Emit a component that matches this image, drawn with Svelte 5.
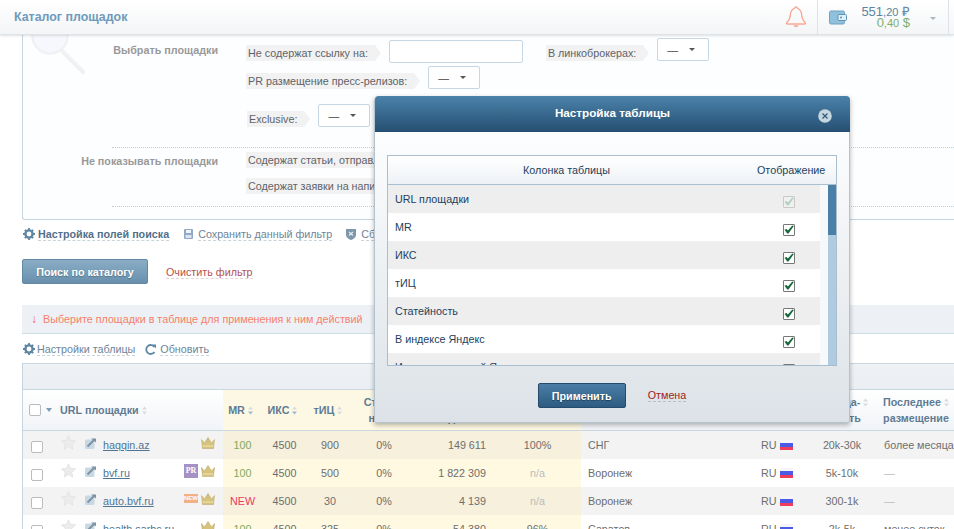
<script lang="ts">
    const rows = [
        { url: "haqqin.az", badge: "", mr: "100", iks: "4500", tic: "900", stat: "0%", visits: "149 611", pct: "100%", city: "СНГ", price: "20k-30k", last: "более месяца" },
        { url: "bvf.ru", badge: "PR", mr: "100", iks: "4500", tic: "500", stat: "0%", visits: "1 822 309", pct: "n/a", city: "Воронеж", price: "5k-10k", last: "—" },
        { url: "auto.bvf.ru", badge: "NEW", mr: "NEW", iks: "4500", tic: "30", stat: "0%", visits: "4 139", pct: "n/a", city: "Воронеж", price: "300-1k", last: "—" },
        { url: "health.sarbc.ru", badge: "", mr: "100", iks: "4500", tic: "325", stat: "0%", visits: "54 380", pct: "96%", city: "Саратов", price: "2k-5k", last: "менее суток" },
    ];

    const columns = [
        { name: "URL площадки", checked: true, locked: true },
        { name: "MR", checked: true },
        { name: "ИКС", checked: true },
        { name: "тИЦ", checked: true },
        { name: "Статейность", checked: true },
        { name: "В индексе Яндекс", checked: true },
        { name: "Индексированный Яндекс", checked: false },
    ];
</script>

{#snippet gear(color: string)}
    <svg class="ico" width="12" height="12" viewBox="0 0 12 12">
        <circle cx="6" cy="6" r="3.6" fill="none" stroke={color} stroke-width="2.4" />
        <g stroke={color} stroke-width="1.8">
            <path d="M6 0v2M6 10v2M0 6h2M10 6h2M1.8 1.8l1.4 1.4M8.8 8.8l1.4 1.4M1.8 10.2l1.4-1.4M8.8 3.2l1.4-1.4" />
        </g>
    </svg>
{/snippet}

{#snippet sort()}
    <svg class="sort" width="5" height="9" viewBox="0 0 5 9">
        <path d="M2.5 0.5L5 3.5H0z" fill="#d5dbe0" />
        <path d="M2.5 8.5L5 5.5H0z" fill="#d5dbe0" />
    </svg>
{/snippet}

{#snippet sortActive()}
    <svg class="sort" width="5" height="9" viewBox="0 0 5 9">
        <path d="M2.5 0.5L5 3.5H0z" fill="#d5dbe0" />
        <path d="M2.5 8.5L5 5.5H0z" fill="#9db8cc" />
    </svg>
{/snippet}

{#snippet select()}
    <div class="select">
        <span>—</span>
        <i class="caret"></i>
    </div>
{/snippet}

<div class="page">
    <header class="topbar">
        <div class="title">Каталог площадок</div>
        <svg class="bell" width="22" height="24" viewBox="0 0 22 24">
            <path
                d="M11 2c-.9 0-1.4.6-1.4 1.4C6.8 4.3 5.6 6.6 5.4 9.6c-.2 3.2-1.5 6-3.7 8.1-.5.5-.2 1.3.5 1.3h17.6c.7 0 1-.8.5-1.3-2.2-2.1-3.500-4.900-3.700-8.100-.2-3-1.400-5.300-4.200-6.200C12.400 2.600 11.900 2 11 2z"
                fill="none"
                stroke="#f9a894"
                stroke-width="1.300"
            />
            <path d="M8.500 20.300c.4 1.300 1.300 2 2.500 2s2.100-.7 2.500-2z" fill="#f9a894" />
        </svg>
        <div class="balance">
            <svg width="18" height="15" viewBox="0 0 18 15">
                <rect x="0.500" y="1" width="15" height="13" rx="1.500" fill="#8fc0dc" stroke="#6fa3c2" />
                <rect x="9" y="4.500" width="8.500" height="6" rx="1" fill="#dff0f8" stroke="#5f94b4" />
                <circle cx="12" cy="7.500" r="1" fill="#5f94b4" />
            </svg>
            <div class="sums">
                <div class="rub">551<small>,20</small> ₽</div>
                <div class="usd">0<small>,40</small> $</div>
            </div>
            <i class="caret light"></i>
        </div>
        <div class="edge"></div>
    </header>

    <section class="filter">
        <svg class="magnifier" width="80" height="60" viewBox="0 0 80 60">
            <circle cx="27" cy="1" r="17.500" fill="#f6f8fd" stroke="#f0f1f3" stroke-width="2.500" />
            <path d="M40 17L60 37" stroke="#f1f1f1" stroke-width="4.500" stroke-linecap="round" />
        </svg>

        <div class="group first">
            <div class="group-label">Выбрать площадки</div>
            <div class="fields">
                <div class="field-row">
                    <span class="tag">Не содержат ссылку на:</span>
                    <input class="text-input" type="text" />
                    <span class="tag broker">В линкоброкерах:</span>
                    {@render select()}
                </div>
                <div class="field-row">
                    <span class="tag">PR размещение пресс-релизов:</span>
                    {@render select()}
                </div>
                <div class="field-row third">
                    <span class="tag">Exclusive:</span>
                    {@render select()}
                </div>
            </div>
        </div>
        <div class="divider"></div>
        <div class="group second">
            <div class="group-label">Не показывать площадки</div>
            <div class="fields tight">
                <div class="field-row"><span class="tag plain">Содержат статьи, отправленные на модерацию</span></div>
                <div class="field-row"><span class="tag plain">Содержат заявки на написание статей</span></div>
            </div>
        </div>
        <div class="divider"></div>
    </section>

    <div class="links">
        {@render gear("#5f87a3")}
        <a class="dash strong">Настройка полей поиска</a>
        <svg class="ico save" width="9" height="10" viewBox="0 0 9 10">
            <rect width="9" height="10" rx="1" fill="#8fa9c6" />
            <rect x="2" y="1" width="5" height="3" fill="#eef3f8" />
            <rect x="1.500" y="6" width="6" height="3" fill="#d9e4ee" />
        </svg>
        <a class="dash">Сохранить данный фильтр</a>
        <svg class="ico shield" width="10" height="12" viewBox="0 0 10 12">
            <path d="M0 1h10v6c0 2.500-2.500 4-5 5-2.500-1-5-2.500-5-5z" fill="#7f97aa" />
            <path d="M3 4l4 3.500M7 4L3 7.500" stroke="#e6ecf0" stroke-width="1.200" />
        </svg>
        <a class="dash">Сбросить фильтр</a>
    </div>

    <div class="actions">
        <button class="search" type="button">Поиск по каталогу</button>
        <a class="clear">Очистить фильтр</a>
    </div>

    <div class="notice"><span class="arrow">↓</span>Выберите площадки в таблице для применения к ним действий</div>

    <div class="table-links">
        {@render gear("#5f87a3")}
        <a class="dash">Настройки таблицы</a>
        <svg class="ico refresh" width="11" height="11" viewBox="0 0 11 11">
            <path d="M9.500 3A4.500 4.500 0 1 0 9.500 8" fill="none" stroke="#5f87a3" stroke-width="1.800" />
            <path d="M7 0.500h4v4z" fill="#5f87a3" />
        </svg>
        <a class="dash">Обновить</a>
    </div>

    <div class="catalog">
        <div class="toolbar"></div>
        <table>
            <colgroup>
                <col style="width: 200px" />
                <col style="width: 39px" />
                <col style="width: 45px" />
                <col style="width: 46px" />
                <col style="width: 62px" />
                <col style="width: 83px" />
                <col style="width: 83px" />
                <col style="width: 170px" />
                <col style="width: 60px" />
                <col style="width: 62px" />
                <col style="width: 86px" />
            </colgroup>
            <thead>
                <tr>
                    <th class="url-head">
                        <div class="url-head-in">
                            <span class="box head-box"></span>
                            <i class="caret blue"></i>
                            <span class="url-title">URL площадки</span>
                            {@render sort()}
                        </div>
                    </th>
                    <th class="hl short">MR {@render sortActive()}</th>
                    <th class="hl short">ИКС {@render sortActive()}</th>
                    <th class="hl short">тИЦ {@render sort()}</th>
                    <th class="hl">Статей-<br />ность</th>
                    <th class="hl">Посетители<br />в день</th>
                    <th class="hl">Доля<br />поиска</th>
                    <th>Регион</th>
                    <th>Язык</th>
                    <th>Посеща- {@render sort()}<br />емость</th>
                    <th>Последнее {@render sort()}<br />размещение</th>
                </tr>
            </thead>
            <tbody>
                {#each rows as row, i}
                    <tr class:odd={i % 2 === 0}>
                        <td class="url-cell">
                            <div class="url-in">
                                <span class="box"></span>
                                <svg class="star" width="15" height="15" viewBox="0 0 15 15">
                                    <path d="M7.500 0.800l2 4.600 5 .5-3.800 3.300 1.100 4.900-4.300-2.600-4.300 2.600 1.100-4.900L.5 5.900l5-.5z" fill="#ececec" stroke="#e0e0e0" stroke-width="0.800" />
                                </svg>
                                <svg class="go" width="11" height="11" viewBox="0 0 11 11">
                                    <rect y="1.500" width="9.500" height="9.500" rx="1.500" fill="#c9d9e4" />
                                    <path d="M2.500 8.500L9.500 1.500" stroke="#7d93a5" stroke-width="2" />
                                    <path d="M6 0.500h5v4z" fill="#7d93a5" />
                                </svg>
                                <a class="site">{row.url}</a>
                                <span class="marks">
                                    {#if row.badge === "PR"}
                                        <span class="badge pr">PR</span>
                                    {:else if row.badge === "NEW"}
                                        <span class="badge new">NEW</span>
                                    {/if}
                                    <svg width="14" height="12" viewBox="0 0 14 12">
                                        <path d="M0.500 2.500L3.500 6 7 0.500 10.500 6l3-3.500-1 9h-11z" fill="#d6c27a" stroke="#b5a468" stroke-width="0.500" />
                                        <path d="M1.700 9h10.600" stroke="#f1e6b8" stroke-width="1" />
                                    </svg>
                                </span>
                            </div>
                        </td>
                        <td class="hl num" class:green={row.mr === "100"} class:hot={row.mr === "NEW"}>{row.mr}</td>
                        <td class="hl num">{row.iks}</td>
                        <td class="hl num">{row.tic}</td>
                        <td class="hl num">{row.stat}</td>
                        <td class="hl right">{row.visits}</td>
                        <td class="hl num pct" class:na={row.pct === "n/a"}>{row.pct}</td>
                        <td class="city">{row.city}</td>
                        <td class="lang">
                            <div class="lang-in">
                                RU
                                <span class="flag"></span>
                            </div>
                        </td>
                        <td class="num">{row.price}</td>
                        <td class="last" class:na={row.last === "—"}>{row.last}</td>
                    </tr>
                {/each}
            </tbody>
        </table>
    </div>

    <div class="modal">
        <div class="modal-head">
            <span>Настройка таблицы</span>
            <button class="close" type="button" aria-label="Закрыть">
                <svg width="14" height="14" viewBox="0 0 14 14">
                    <circle cx="7" cy="7" r="6.800" fill="#c5d6e0" />
                    <path d="M4.500 4.500l5 5M9.500 4.500l-5 5" stroke="#2f5a7c" stroke-width="1.200" />
                </svg>
            </button>
        </div>
        <div class="columns">
            <div class="columns-head">
                <span class="col-name">Колонка таблицы</span>
                <span class="col-show">Отображение</span>
            </div>
            <div class="columns-body">
                <div class="columns-list">
                    {#each columns as col, i}
                        <div class="col-row" class:odd={i % 2 === 0}>
                            <span>{col.name}</span>
                            <span class="check" class:locked={col.locked}>
                                {#if col.checked}
                                    <svg width="10" height="9" viewBox="0 0 10 9">
                                        <path d="M0.500 4.800L2.600 4 3.900 5.600 8.300 0.500 9.800 1 4.500 8.400H3.200z" fill={col.locked ? "#b5cfc0" : "#17693c"} />
                                    </svg>
                                {/if}
                            </span>
                        </div>
                    {/each}
                </div>
                <div class="scroll"><div class="thumb"></div></div>
            </div>
        </div>
        <div class="modal-foot">
            <button class="apply" type="button">Применить</button>
            <a class="cancel">Отмена</a>
        </div>
    </div>
</div>

<style>
    :global(body) {
        margin: 0;
        background: #fff;
    }

    .page {
        position: relative;
        width: 954px;
        height: 529px;
        overflow: hidden;
        font-family: "Liberation Sans", Arial, sans-serif;
        font-size: 10.75px;
        color: #666;
    }

    a {
        cursor: pointer;
    }

    .topbar {
        position: relative;
        z-index: 2;
        display: flex;
        align-items: center;
        height: 35px;
        box-sizing: border-box;
        padding-left: 14px;
        background: linear-gradient(#fff, #f3f5f7);
        border-bottom: 1px solid #dfe4e8;
        box-shadow: 0 1px 2px rgba(0, 0, 0, 0.12);
    }

    .title {
        flex: 1;
        font-size: 12.4px;
        font-weight: bold;
        color: #6f9abb;
    }

    .bell {
        margin-right: 10px;
    }

    .balance {
        display: flex;
        align-items: center;
        width: 131px;
        height: 35px;
        box-sizing: border-box;
        padding-left: 11px;
        border-left: 1px solid #dde3e8;
    }

    .sums {
        width: 63px;
        margin-right: 20px;
        text-align: right;
        font-size: 13px;
        color: #5f83a0;
    }

    .rub,
    .usd {
        height: 11px;
        line-height: 11px;
    }

    .sums small {
        font-size: 11px;
        line-height: 11px;
    }

    .usd {
        color: #7eae6e;
    }

    .edge {
        width: 5px;
        height: 35px;
        border-left: 1px solid #dde3e8;
    }

    .caret {
        display: inline-block;
        width: 0;
        height: 0;
        border-left: 3.5px solid transparent;
        border-right: 3.5px solid transparent;
        border-top: 3.5px solid #555;
    }

    .caret.light {
        margin-top: 3px;
        border-left-width: 3px;
        border-right-width: 3px;
        border-top: 3px solid #a9b5bf;
    }

    .caret.blue {
        border-top: 4px solid #7d9db6;
    }

    .filter {
        position: relative;
        height: 181px;
        margin-left: 22px;
        padding-top: 3px;
        overflow: hidden;
        background: #fdfeff;
        border-left: 1px solid #c6d6e1;
        border-bottom: 1px solid #c6d6e1;
        border-bottom-left-radius: 3px;
    }

    .magnifier {
        position: absolute;
        left: 0;
        top: 0;
    }

    .group {
        display: flex;
    }

    .group.first {
        padding-bottom: 20px;
    }

    .group.second {
        padding-top: 4px;
        padding-bottom: 12px;
    }

    .group-label {
        flex: 0 0 195px;
        margin-right: 28px;
        padding-top: 6px;
        text-align: right;
        font-weight: bold;
        color: #999;
    }

    .group.second .group-label {
        padding-top: 3px;
    }

    .fields {
        display: flex;
        flex-direction: column;
        gap: 5px;
    }

    .fields.tight {
        gap: 10px;
    }

    .field-row {
        display: flex;
        align-items: flex-end;
    }

    .field-row.third {
        margin-top: 10px;
        padding-left: 1px;
    }

    .tag {
        position: relative;
        height: 16px;
        line-height: 17px;
        padding: 0 7px 0 2px;
        margin-right: 14px;
        background: #f2f2f2;
        white-space: nowrap;
        color: #5f6368;
    }

    .tag::after {
        content: "";
        position: absolute;
        left: 100%;
        top: 0;
        border-left: 6px solid #f2f2f2;
        border-top: 8px solid transparent;
        border-bottom: 8px solid transparent;
    }

    .tag.plain {
        margin-right: 0;
    }

    .tag.broker {
        margin-left: 23px;
    }

    .text-input {
        width: 134px;
        height: 23px;
        box-sizing: border-box;
        margin: 0 0 -2px;
        background: #fff;
        border: 1px solid #c6d7e3;
        border-radius: 2px;
    }

    .select {
        display: flex;
        align-items: center;
        justify-content: space-between;
        width: 52px;
        height: 23px;
        box-sizing: border-box;
        padding: 0 13px 0 9px;
        background: #fff;
        border: 1px solid #c6d7e3;
        border-radius: 2px;
        color: #444;
    }

    .divider {
        margin-left: 89px;
        border-top: 1px dotted #b9cfdd;
    }

    .links {
        display: flex;
        align-items: center;
        height: 16px;
        margin: 6px 0 0 23px;
    }

    .ico {
        flex: none;
    }

    .dash {
        border-bottom: 1px dashed #c9d3da;
        line-height: 12px;
        color: #6d8598;
    }

    .dash.strong {
        margin-left: 3px;
        font-weight: bold;
        color: #52708a;
    }

    .links .save {
        margin-left: 15px;
        margin-right: 5px;
    }

    .links .shield {
        margin-left: 14px;
        margin-right: 5px;
    }

    .actions {
        display: flex;
        align-items: center;
        margin: 17px 0 0 22px;
    }

    .search {
        width: 126px;
        height: 25px;
        padding: 0;
        font: bold 10.75px "Liberation Sans", Arial, sans-serif;
        color: #fff;
        background: linear-gradient(#8aadc5, #6890ad);
        border: 1px solid #6288a4;
        border-radius: 2px;
        text-shadow: 0 1px 1px rgba(0, 0, 0, 0.25);
    }

    .clear {
        margin-left: 18px;
        padding-top: 1px;
        color: #b5514f;
        border-bottom: 1px dashed #e6d3d3;
        line-height: 12px;
    }

    .notice {
        display: flex;
        align-items: center;
        height: 29px;
        box-sizing: border-box;
        margin: 21px 0 0 22px;
        padding-left: 9px;
        background: #edf1f6;
        border-bottom: 1px solid #cfdde7;
        color: #f67f6c;
    }

    .arrow {
        width: 12px;
        font-size: 12px;
        color: #f4606a;
    }

    .table-links {
        display: flex;
        align-items: center;
        height: 16px;
        margin: 7px 0 0 23px;
    }

    .table-links .dash:first-of-type {
        margin-left: 2px;
    }

    .table-links .refresh {
        margin-left: 10px;
        margin-right: 4px;
    }

    .catalog {
        margin: 6px 0 0 22px;
        width: 980px;
        border-left: 1px solid #c6d6e1;
    }

    .toolbar {
        height: 25px;
        background: linear-gradient(#eff2f5, #ebeef2);
        border-top: 1px solid #c9d7e1;
        border-bottom: 1px solid #c9d7e1;
    }

    table {
        width: 936px;
        table-layout: fixed;
        border-collapse: collapse;
    }

    th {
        height: 40px;
        padding: 0;
        font-size: 10.75px;
        font-weight: bold;
        line-height: 16px;
        color: #5f7b93;
        background: linear-gradient(#fff, #f1f4f7);
        border-bottom: 1px solid #c9d7e1;
        white-space: nowrap;
    }

    th.hl {
        background: #fdf8e3;
    }

    th.short {
        padding-right: 4px;
    }

    .url-head-in {
        display: flex;
        align-items: center;
        padding-left: 6px;
    }

    .head-box {
        margin-right: 5px;
    }

    .url-title {
        margin-left: 8px;
        margin-right: 3px;
    }

    .box {
        display: block;
        flex: none;
        width: 10px;
        height: 10px;
        background: #fff;
        border: 1px solid #bbb;
        border-radius: 2px;
    }

    .sort {
        vertical-align: -1px;
    }

    tbody tr {
        height: 28px;
        background: #fff;
    }

    tbody tr.odd {
        background: #f3f3f3;
    }

    td {
        padding: 0;
        color: #6e6e6e;
        white-space: nowrap;
    }

    td.hl {
        background: #fff9e2;
    }

    tr.odd td.hl {
        background: #f6f0dc;
    }

    .num {
        text-align: center;
    }

    .pct {
        padding-right: 4px;
    }

    .right {
        text-align: right;
        padding-right: 12px;
    }

    .green {
        color: #7fa95e;
    }

    .hot {
        color: #f1395d;
    }

    .na {
        color: #bbb;
    }

    .url-in {
        display: flex;
        align-items: center;
        padding: 0 8px 0 8px;
    }

    .url-in .box {
        margin-top: 4px;
    }

    .star {
        margin-left: 18px;
        margin-top: -4px;
    }

    .go {
        margin-left: 9px;
        margin-top: -3px;
    }

    .site {
        margin-left: 7px;
        color: #4f7593;
        text-decoration: underline;
    }

    .marks {
        display: flex;
        align-items: center;
        gap: 3px;
        margin-left: auto;
        margin-top: -4px;
    }

    .badge {
        display: block;
        width: 14px;
        height: 14px;
        line-height: 14px;
        text-align: center;
        color: #fff;
    }

    .badge.pr {
        font: bold 8px/13px "Liberation Serif", serif;
        background: #a692c4;
    }

    .badge.new {
        height: 9px;
        font: bold 6px/9px "Liberation Sans", sans-serif;
        background: #f2b184;
    }

    .city {
        padding-left: 7px;
    }

    .lang-in {
        display: flex;
        align-items: center;
        gap: 3px;
        padding-left: 10px;
    }

    .flag {
        width: 13px;
        height: 10px;
        background: linear-gradient(#f6f6fa 33%, #4b5be6 33% 66%, #ef3d5c 66%);
    }

    .last {
        padding-left: 11px;
    }

    .modal {
        position: absolute;
        left: 374px;
        top: 96px;
        z-index: 3;
        width: 476px;
        height: 327px;
        box-sizing: border-box;
        background: linear-gradient(#fcfdfe 12%, #dce2e7);
        border: 1px solid #b3c4d1;
        border-radius: 4px 4px 2px 2px;
        box-shadow: 0 2px 5px rgba(0, 0, 0, 0.3);
    }

    .modal-head {
        position: relative;
        display: flex;
        align-items: center;
        justify-content: center;
        height: 36px;
        margin: -1px -1px 0 0;
        padding-bottom: 3px;
        box-sizing: border-box;
        background: linear-gradient(#4b82aa, #254f72);
        border-radius: 4px 4px 0 0;
        font-size: 11.7px;
        font-weight: bold;
        color: #fff;
    }

    .close {
        position: absolute;
        right: 18px;
        top: 13px;
        width: 14px;
        height: 14px;
        padding: 0;
        background: none;
        border: 0;
    }

    .columns {
        margin: 23px 12px 0 12px;
        border: 1px solid #a9bfd0;
        border-bottom: 0;
        color: #1d3f60;
    }

    .columns-head {
        position: relative;
        display: flex;
        height: 28px;
        line-height: 28px;
        background: linear-gradient(#fff, #eef2f6);
        border-bottom: 1px solid #a9bfd0;
    }

    .col-name {
        width: 357px;
        text-align: center;
    }

    .col-show {
        margin-left: 12px;
    }

    .columns-body {
        display: flex;
        height: 180px;
        overflow: hidden;
        background: #f6f8fa;
        border-bottom: 1px solid #a9bfd0;
    }

    .columns-list {
        width: 432px;
    }

    .col-row {
        display: flex;
        align-items: center;
        justify-content: space-between;
        flex: none;
        height: 28px;
        padding: 0 25px 0 7px;
        background: #fff;
    }

    .col-row.odd {
        background: #eee;
    }

    .check {
        display: flex;
        align-items: center;
        justify-content: center;
        width: 10px;
        height: 10px;
        margin-top: 5px;
        background: #fff;
        border: 1px solid #777;
        border-radius: 1px;
    }

    .check.locked {
        background: #f0f0f0;
        border-color: #c9c9c9;
    }

    .scroll {
        width: 8px;
        margin-left: 8px;
        background: #b0cbe0;
    }

    .thumb {
        height: 50px;
        background: #4a80a8;
    }

    .modal-foot {
        display: flex;
        align-items: center;
        justify-content: center;
        gap: 22px;
        height: 56px;
        padding-top: 3px;
        box-sizing: border-box;
    }

    .apply {
        width: 88px;
        height: 25px;
        padding: 0;
        font: bold 10.75px "Liberation Sans", Arial, sans-serif;
        color: #fff;
        background: linear-gradient(#4b7ea6, #2e5b81);
        border: 1px solid #234b6c;
        border-radius: 2px;
        text-shadow: 0 1px 1px rgba(0, 0, 0, 0.4);
    }

    .cancel {
        color: #a01c1c;
        line-height: 12px;
        border-bottom: 1px dashed #bdbdbd;
    }
</style>
